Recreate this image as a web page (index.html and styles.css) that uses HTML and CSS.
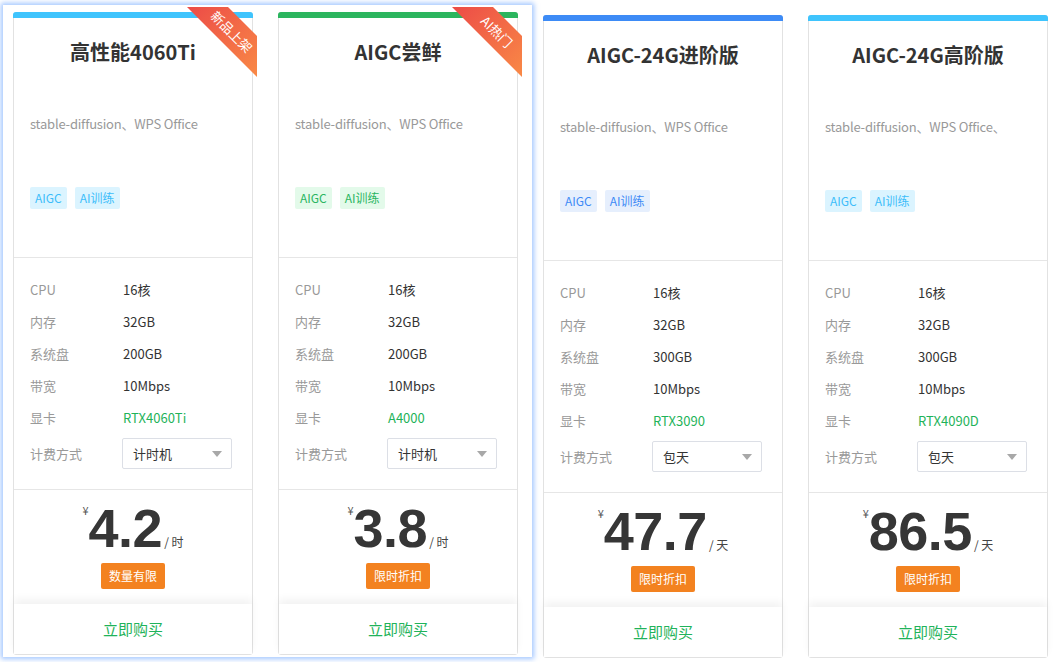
FILE: index.html
```html
<!DOCTYPE html>
<html lang="zh">
<head>
<meta charset="utf-8">
<link rel="stylesheet" href="styles.css">
</head>
<body>
<div class="row">
  <div class="group">
    <div class="card c-sky">
      <div class="bar"></div>
      <div class="ribbon"><span>新品上架</span></div>
      <div class="head">
        <h3 class="title">高性能4060Ti</h3>
        <p class="desc">stable-diffusion、WPS Office</p>
        <div class="tags"><span class="tag">AIGC</span><span class="tag">AI训练</span></div>
      </div>
      <div class="specs">
        <div class="spec"><span class="lbl">CPU</span><span class="val">16核</span></div>
        <div class="spec"><span class="lbl">内存</span><span class="val">32GB</span></div>
        <div class="spec"><span class="lbl">系统盘</span><span class="val">200GB</span></div>
        <div class="spec"><span class="lbl">带宽</span><span class="val">10Mbps</span></div>
        <div class="spec"><span class="lbl">显卡</span><span class="val gpu">RTX4060Ti</span></div>
        <div class="spec bill"><span class="lbl">计费方式</span><div class="select">计时机<i class="caret"></i></div></div>
      </div>
      <div class="pricing">
        <div class="price"><span class="yen">¥</span><span class="num">4.2</span><span class="unit">/ 时</span></div>
        <span class="badge">数量有限</span>
      </div>
      <div class="buy">立即购买</div>
    </div>
    <div class="card c-green">
      <div class="bar"></div>
      <div class="ribbon"><span>AI热门</span></div>
      <div class="head">
        <h3 class="title">AIGC尝鲜</h3>
        <p class="desc">stable-diffusion、WPS Office</p>
        <div class="tags"><span class="tag">AIGC</span><span class="tag">AI训练</span></div>
      </div>
      <div class="specs">
        <div class="spec"><span class="lbl">CPU</span><span class="val">16核</span></div>
        <div class="spec"><span class="lbl">内存</span><span class="val">32GB</span></div>
        <div class="spec"><span class="lbl">系统盘</span><span class="val">200GB</span></div>
        <div class="spec"><span class="lbl">带宽</span><span class="val">10Mbps</span></div>
        <div class="spec"><span class="lbl">显卡</span><span class="val gpu">A4000</span></div>
        <div class="spec bill"><span class="lbl">计费方式</span><div class="select">计时机<i class="caret"></i></div></div>
      </div>
      <div class="pricing">
        <div class="price"><span class="yen">¥</span><span class="num">3.8</span><span class="unit">/ 时</span></div>
        <span class="badge">限时折扣</span>
      </div>
      <div class="buy">立即购买</div>
    </div>
  </div>
  <div class="card c-blue solo">
    <div class="bar"></div>
    <div class="head">
      <h3 class="title">AIGC-24G进阶版</h3>
      <p class="desc">stable-diffusion、WPS Office</p>
      <div class="tags"><span class="tag">AIGC</span><span class="tag">AI训练</span></div>
    </div>
    <div class="specs">
      <div class="spec"><span class="lbl">CPU</span><span class="val">16核</span></div>
      <div class="spec"><span class="lbl">内存</span><span class="val">32GB</span></div>
      <div class="spec"><span class="lbl">系统盘</span><span class="val">300GB</span></div>
      <div class="spec"><span class="lbl">带宽</span><span class="val">10Mbps</span></div>
      <div class="spec"><span class="lbl">显卡</span><span class="val gpu">RTX3090</span></div>
      <div class="spec bill"><span class="lbl">计费方式</span><div class="select">包天<i class="caret"></i></div></div>
    </div>
    <div class="pricing">
      <div class="price"><span class="yen">¥</span><span class="num">47.7</span><span class="unit">/ 天</span></div>
      <span class="badge">限时折扣</span>
    </div>
    <div class="buy">立即购买</div>
  </div>
  <div class="card c-sky solo">
    <div class="bar"></div>
    <div class="head">
      <h3 class="title">AIGC-24G高阶版</h3>
      <p class="desc">stable-diffusion、WPS Office、</p>
      <div class="tags"><span class="tag">AIGC</span><span class="tag">AI训练</span></div>
    </div>
    <div class="specs">
      <div class="spec"><span class="lbl">CPU</span><span class="val">16核</span></div>
      <div class="spec"><span class="lbl">内存</span><span class="val">32GB</span></div>
      <div class="spec"><span class="lbl">系统盘</span><span class="val">300GB</span></div>
      <div class="spec"><span class="lbl">带宽</span><span class="val">10Mbps</span></div>
      <div class="spec"><span class="lbl">显卡</span><span class="val gpu">RTX4090D</span></div>
      <div class="spec bill"><span class="lbl">计费方式</span><div class="select">包天<i class="caret"></i></div></div>
    </div>
    <div class="pricing">
      <div class="price"><span class="yen">¥</span><span class="num">86.5</span><span class="unit">/ 天</span></div>
      <span class="badge">限时折扣</span>
    </div>
    <div class="buy">立即购买</div>
  </div>
</div>
</body>
</html>
```
FILE: styles.css
```css
* { box-sizing: border-box; }
html, body {
  margin: 0;
  padding: 0;
  background: #fff;
  height: 662px;
  overflow: hidden;
}
body {
  font-family: "Noto Sans CJK SC", "Noto Sans", sans-serif;
  color: #333;
}
.row {
  display: flex;
  align-items: flex-start;
  padding-top: 5px;
  gap: 25px;
}
.group {
  display: flex;
  gap: 25px;
  margin-left: 3px;
  margin-right: -14px;
  padding: 7px 14px 2px 10px;
  background: #fff;
  box-shadow: 0 0 5px 2px rgba(100, 160, 255, 0.6);
}
.card.solo { margin-top: 10px; }
.card {
  position: relative;
  width: 240px;
  height: 643px;
  background: #fff;
  border: 1px solid #e2e2e2;
  border-radius: 3px;
  display: flex;
  flex-direction: column;
}
.bar {
  height: 6px;
  margin: -1px -1px 0;
  border-radius: 3px 3px 0 0;
}
.c-sky .bar { background: #3fc4fd; }
.c-green .bar { background: #2bb55e; }
.c-blue .bar { background: #3d8bf6; }

.ribbon {
  position: absolute;
  top: -6px;
  right: -5px;
  width: 70px;
  height: 71px;
  overflow: hidden;
}
.ribbon span {
  position: absolute;
  left: -6px;
  top: 10px;
  width: 102px;
  height: 29px;
  line-height: 29px;
  text-align: center;
  transform: rotate(45deg);
  background: linear-gradient(to right, #ec4a47, #f98a46);
  color: #fff;
  font-size: 13px;
}

.head {
  height: 240px;
  padding: 20px 16px 0;
  border-bottom: 1px solid #e6e6e6;
}
.title {
  margin: 0;
  font-size: 20px;
  line-height: 28px;
  font-weight: 700;
  text-align: center;
  color: #333;
}
.desc {
  margin: 48px 0 0;
  font-size: 13px;
  line-height: 20px;
  color: #999;
  letter-spacing: -0.2px;
}
.tags {
  display: flex;
  gap: 8px;
  margin-top: 53px;
}
.tag {
  height: 22px;
  line-height: 22px;
  padding: 0 5px;
  font-size: 12px;
  border-radius: 2px;
}
.c-sky .tag { background: #dbf4ff; color: #3dbdfa; }
.c-green .tag { background: #e3faea; color: #2ab561; }
.c-blue .tag { background: #e6effd; color: #3d8af6; }

.specs {
  padding: 15px 16px 20px;
  border-bottom: 1px solid #e6e6e6;
}
.spec {
  display: flex;
  align-items: center;
  height: 32px;
  font-size: 13px;
}
.lbl {
  width: 92px;
  color: #999;
}
.val { color: #333; padding-left: 1px; }
.val.gpu { color: #1fb35a; }
.spec.bill {
  height: 31px;
  margin-top: 5px;
}
.select {
  position: relative;
  width: 110px;
  height: 31px;
  line-height: 29px;
  padding-left: 10px;
  border: 1px solid #dcdfe6;
  border-radius: 2px;
  font-size: 13px;
  color: #333;
}
.caret {
  position: absolute;
  right: 9px;
  top: 12px;
  width: 0;
  height: 0;
  border-left: 5px solid transparent;
  border-right: 5px solid transparent;
  border-top: 6px solid #a8a8a8;
}

.pricing {
  flex: 1;
  display: flex;
  flex-direction: column;
  align-items: center;
  padding-top: 11px;
}
.price {
  display: flex;
  align-items: baseline;
  height: 54px;
}
.yen {
  align-self: flex-start;
  font-size: 11px;
  line-height: 1;
  color: #555;
  margin-top: 4px;
}
.num {
  font-family: "Liberation Sans", Arial, sans-serif;
  font-weight: 700;
  font-size: 54px;
  line-height: 54px;
  color: #363636;
  letter-spacing: -0.5px;
}
.unit {
  font-size: 12px;
  color: #444;
  margin-left: 2px;
}
.badge {
  margin-top: 8px;
  height: 26px;
  line-height: 26px;
  padding: 0 8px;
  background: #f38220;
  color: #fff;
  font-size: 12px;
  border-radius: 2px;
}
.buy {
  height: 50px;
  line-height: 50px;
  text-align: center;
  font-size: 15px;
  color: #1fb35a;
  background: #fff;
  box-shadow: 0 -5px 8px rgba(0, 0, 0, 0.05);
}
```
